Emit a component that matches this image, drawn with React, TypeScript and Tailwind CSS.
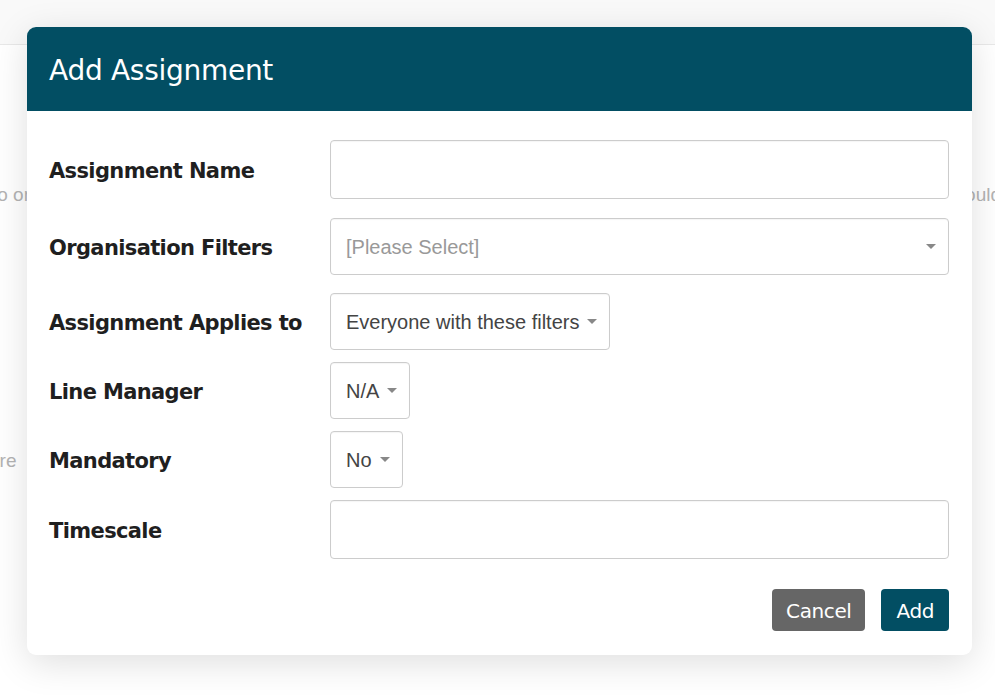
import React from 'react'

const labelFont = { fontFamily: '"DejaVu Sans", Tahoma, sans-serif' }

function Caret() {
  return (
    <svg width="10" height="5" viewBox="0 0 10 5" className="shrink-0">
      <path d="M0 0h10L5 5z" fill="#888" />
    </svg>
  )
}

function FieldRow({
  label,
  className,
  children,
}: {
  label: string
  className?: string
  children: React.ReactNode
}) {
  return (
    <div className={`flex items-center ${className ?? ''}`}>
      <div className="w-[281px] shrink-0 pt-[4px] text-[21px] font-bold tracking-[-0.03em] text-[#1f1f1f]">
        {label}
      </div>
      {children}
    </div>
  )
}

function SelectBox({
  value,
  placeholder,
  full,
}: {
  value: string
  placeholder?: boolean
  full?: boolean
}) {
  return (
    <div
      className={`flex h-[57px] items-center rounded-[4px] border border-[#cccccc] bg-white pl-[15px] pr-[12px] shadow-[inset_0_1px_1px_rgba(0,0,0,0.04)] ${
        full ? 'flex-1 justify-between' : 'gap-[8px]'
      }`}
    >
      <span
        className={`font-['Liberation_Sans',Arial,sans-serif] text-[20px] ${
          placeholder ? 'text-[#999999]' : 'text-[#444444]'
        }`}
      >
        {value}
      </span>
      <Caret />
    </div>
  )
}

function TextBox() {
  return (
    <div className="h-[59px] flex-1 rounded-[4px] border border-[#cccccc] bg-white shadow-[inset_0_1px_1px_rgba(0,0,0,0.04)]" />
  )
}

export default function App() {
  return (
    <div className="relative h-[695px] w-[995px] overflow-hidden bg-white font-['Liberation_Sans',Arial,sans-serif]">
      {/* page behind the dialog */}
      <div className="h-[45px] border-b border-[#e8e8e8] bg-[#f9f9f9]" />
      <div className="flex justify-between pt-[137px] text-[19px] leading-[26px] text-[#b3b3b3] whitespace-nowrap">
        <span className="-ml-[8px]">to organise</span>
        <span className="-mr-[6px]">should</span>
      </div>
      <div className="pt-[240px] text-[19px] leading-[26px] text-[#b3b3b3]">
        <span className="-ml-[11px] inline-block">are</span>
      </div>

      {/* dialog */}
      <div
        className="absolute left-[27px] top-[27px] w-[945px] overflow-hidden rounded-[9px] bg-white shadow-[0_8px_36px_rgba(0,0,0,0.13)]"
        style={labelFont}
      >
        <div className="flex h-[84px] items-center bg-[#024e63] pl-[22px] pt-[4px]">
          <h2 className="text-[28px] font-normal tracking-[-0.01em] text-white">Add Assignment</h2>
        </div>

        <div className="pl-[22px] pr-[23px] pt-[29px] pb-[24px]">
          <FieldRow label="Assignment Name">
            <TextBox />
          </FieldRow>
          <FieldRow label="Organisation Filters" className="mt-[19px]">
            <SelectBox value="[Please Select]" placeholder full />
          </FieldRow>
          <FieldRow label="Assignment Applies to" className="mt-[18px]">
            <SelectBox value="Everyone with these filters" />
          </FieldRow>
          <FieldRow label="Line Manager" className="mt-[12px]">
            <SelectBox value="N/A" />
          </FieldRow>
          <FieldRow label="Mandatory" className="mt-[12px]">
            <SelectBox value="No" />
          </FieldRow>
          <FieldRow label="Timescale" className="mt-[12px]">
            <TextBox />
          </FieldRow>

          <div className="mt-[30px] flex justify-end gap-[16px]">
            <button className="h-[42px] rounded-[4px] bg-[#666666] px-[14px] pt-[2px] text-[20px] tracking-[-0.02em] text-white">
              Cancel
            </button>
            <button className="h-[42px] rounded-[4px] bg-[#024e63] px-[15px] pt-[2px] text-[20px] tracking-[-0.02em] text-white">
              Add
            </button>
          </div>
        </div>
      </div>
    </div>
  )
}
